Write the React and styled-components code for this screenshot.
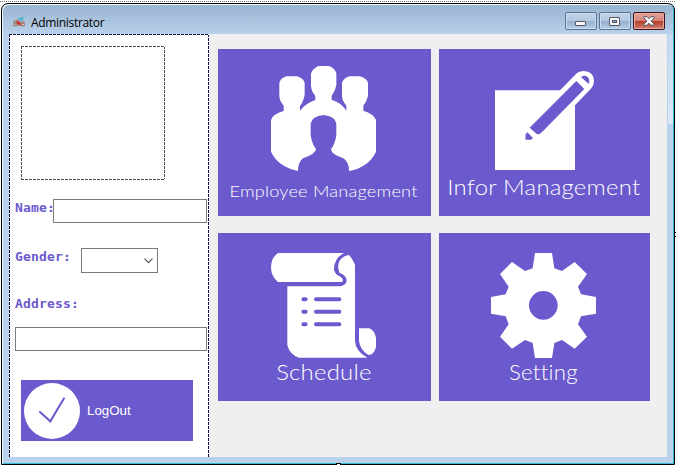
import React from "react";
import styled, { createGlobalStyle } from "styled-components";

const violet = "#6a5acd";

const GlobalStyle = createGlobalStyle`
  * { box-sizing: border-box; }
  body { margin: 0; background: #fff; overflow: hidden; }
`;

const Designer = styled.div`
  position: relative;
  width: 676px;
  height: 465px;
  padding: 3px 1px 0;
  background: repeating-linear-gradient(90deg, #777 0 1px, #fff 1px 2px) 0 1px / 100% 1px no-repeat #fff;
  font-family: "Liberation Sans", sans-serif;
`;

const Window = styled.div`
  display: flex;
  flex-direction: column;
  width: 674px;
  height: 462px;
  padding: 0 7px 7px;
  border: 1px solid #000;
  border-radius: 7px 7px 0 0;
  background:
    linear-gradient(#c3d8ed, #dbe8f6) 666px 30px / 5px 90px no-repeat,
    linear-gradient(#99b4d1, #b9d1ea) 0 0 / 100% 30px no-repeat,
    #b9d1ea;
  box-shadow: inset 1px 1px 0 #f3f8fc, inset -1px -1px 0 #35b8d4;
`;

const TitleBar = styled.header`
  display: flex;
  flex: 0 0 30px;
  align-items: center;
  gap: 5px;
  padding: 6px 2px 0 3px;
`;

const Title = styled.h1`
  flex: 1;
  margin: 0;
  padding-top: 1px;
  font: 400 12px/16px "Open Sans", sans-serif;
  letter-spacing: -0.32px;
  color: #000;
`;

const WindowButtons = styled.div`
  display: flex;
  gap: 2px;
  margin-top: -2px;
`;

const WindowButton = styled.button`
  display: flex;
  align-items: center;
  justify-content: center;
  width: 32px;
  height: 18px;
  padding: ${(p) => p.$drop || 0}px 0 0;
  border: 1px solid ${(p) => (p.$close ? "#43101c" : "#5d7290")};
  border-radius: 2px;
  background: ${(p) =>
    p.$close
      ? "linear-gradient(#e5a79c, #d68477 48%, #b93a29 50%, #c35b48 75%, #d48573)"
      : "linear-gradient(#c1d4e8, #b2c8df 48%, #96b0cb 50%, #a3bdd8 75%, #b9d2ea)"};
  box-shadow: inset 0 0 0 1px ${(p) => (p.$close ? "#e4aaa0" : "#ccdef0")};
`;

const Client = styled.main`
  display: flex;
  flex: 1;
  background: #efefef;
`;

const Side = styled.aside`
  width: 200px;
  height: 423px;
  padding: 12px 0 0 6px;
  background:
    repeating-linear-gradient(90deg, #140c48 0 3px, #fff 3px 4px) 0 0 / 100% 1px no-repeat,
    repeating-linear-gradient(#140c48 0 3px, #fff 3px 4px) 0 0 / 1px 100% no-repeat,
    repeating-linear-gradient(#140c48 0 3px, #fff 3px 4px) 100% 0 / 1px 100% no-repeat,
    #fff;
`;

const Photo = styled.div`
  width: 144px;
  height: 134px;
  margin: 0 0 19px 6px;
  background:
    repeating-linear-gradient(90deg, #505050 0 3px, #fff 3px 4px) 0 0 / 100% 1px no-repeat,
    repeating-linear-gradient(90deg, #505050 0 3px, #fff 3px 4px) 0 100% / 100% 1px no-repeat,
    repeating-linear-gradient(#505050 0 3px, #fff 3px 4px) 0 0 / 1px 100% no-repeat,
    repeating-linear-gradient(#505050 0 3px, #fff 3px 4px) 100% 0 / 1px 100% no-repeat;
`;

const Field = styled.div`
  display: flex;
  height: ${(p) => p.$height}px;
  margin-bottom: ${(p) => p.$after}px;
`;

const Label = styled.label`
  width: ${(p) => p.$width}px;
  padding-top: 1px;
  white-space: nowrap;
  font: 700 13px/16px "DejaVu Sans Mono", monospace;
  letter-spacing: 0.17px;
  color: ${violet};
`;

const Input = styled.input`
  width: ${(p) => p.$width}px;
  height: 24px;
  padding: 0 4px;
  border: 1px solid #7a7a7a;
  border-radius: 0;
  background: #fff;
  outline: none;
`;

const Combo = styled.div`
  display: flex;
  align-items: center;
  justify-content: flex-end;
  width: 77px;
  height: 25px;
  padding-right: 4px;
  border: 1px solid #7a7a7a;
`;

const LogOut = styled.button`
  display: flex;
  align-items: center;
  gap: 7px;
  width: 172px;
  height: 61px;
  margin: 29px 0 0 6px;
  padding: 1px 0 0 3px;
  border: 0;
  background: ${violet};
  color: #fff;
  font: 400 13.33px/18px "Liberation Sans", sans-serif;
`;

const Tiles = styled.section`
  display: grid;
  grid-template: 167px 168px / 213px 211px;
  gap: 17px 8px;
  align-content: start;
  padding: 15px 0 0 9px;
`;

const Tile = styled.button`
  display: flex;
  flex-direction: column;
  align-items: center;
  padding: ${(p) => p.$top}px 2px 0 0;
  border: 0;
  background: ${violet};
  color: #fff;
`;

const Caption = styled.span`
  margin-top: ${(p) => p.$gap}px;
  font: 300 ${(p) => p.$size}px/24px Lato, sans-serif;
  letter-spacing: 0.2px;
  transform: scaleX(${(p) => p.$stretch});
  white-space: nowrap;
`;

const Handle = styled.i`
  position: absolute;
  left: ${(p) => p.$x}px;
  top: ${(p) => p.$y}px;
  width: 5px;
  height: 5px;
  border: 1px solid #000;
  background: #fff;
`;

const AppIcon = () => (
  <svg width="14" height="12" viewBox="0 0 14 12">
    <path d="M6 2l3-1 3 0-1 4-4 1z" fill="#62b4d4" />
    <path d="M1 5l5-2 2 3 4-1 1 2-3 3H4L1 8z" fill="#a89088" />
    <path d="M4 5l4 1 1 3-4-1z" fill="#cc2f2b" />
    <circle cx="3" cy="8.5" r="2" fill="#8a8c90" />
    <circle cx="11" cy="8.5" r="2" fill="#a6716a" />
    <circle cx="3" cy="8.5" r=".8" fill="#d8b0a4" />
    <circle cx="11" cy="8.5" r=".8" fill="#eee" />
  </svg>
);

const MinimizeIcon = () => (
  <svg width="12" height="6" viewBox="0 0 12 6">
    <rect x=".5" y="1.5" width="10" height="4" rx=".5" fill="#f5f5f5" stroke="#535666" />
  </svg>
);

const MaximizeIcon = () => (
  <svg width="12" height="10" viewBox="0 0 12 10">
    <rect x=".5" y=".5" width="10" height="8" rx=".5" fill="#f5f5f5" stroke="#535666" />
    <rect x="3.5" y="3.5" width="4" height="2" fill="#91abc8" stroke="#535666" />
  </svg>
);

const CloseIcon = () => (
  <svg width="12" height="10" viewBox="0 0 12 10">
    <path
      d="M.7.7h3.4L6 2.7 7.9.7h3.4v1L8.2 5l3.1 3.2v1H7.9L6 7.2 4.1 9.3H.7v-1L3.8 5 .7 1.7z"
      fill="#f5f5f5"
      stroke="#535666"
    />
  </svg>
);

const Chevron = () => (
  <svg width="9" height="6" viewBox="0 0 9 6">
    <path d="M.5.7l4 4 4-4" fill="none" stroke="#555" strokeWidth="1.2" />
  </svg>
);

const CheckIcon = () => (
  <svg width="56" height="56" viewBox="0 0 168 168">
    <circle cx="84" cy="84" r="84" fill="#fff" />
    <path d="M48 87l31 28 41-69" fill="none" stroke={violet} strokeWidth="6" strokeLinecap="round" />
  </svg>
);

const PeopleIcon = () => (
  <svg width="105" height="105" viewBox="168 62 315 315">
    <path
      fill="#fff"
      d="M168 224Q172 207 206 197V181Q193 165 193 151V113Q195 100 214 93H246Q267 99 269 114V148Q267 164 255 183V196Q270 175 301 164V152Q288 137 288 120V85Q291 72 310 62H342Q360 69 364 84V119Q362 135 350 152V163Q381 173 394 196V181Q381 165 381 151V113Q385 98 404 93H435Q456 99 459 113V151Q457 165 445 181V196Q477 206 483 224V319Q462 365 402 377Q402 349 385 339Q349 327 348 312Q361 294 364 268V235Q361 212 325 209Q291 212 287 235V268Q290 294 303 311Q303 325 264 339Q249 350 249 377Q189 364 168 319Z"
    />
  </svg>
);

const PenIcon = () => (
  <svg width="101" height="99" viewBox="174 77 303 297">
    <path d="M180 135H375L426 83Q435 77 446 77Q477 78 477 108Q477 119 469 129L420 180V374H180Z" fill="#fff" />
    <g fill={violet}>
      <path d="M424 107L448 131L322 259Q315 267 306 267L284 247Z" />
      <path d="M438 95Q449 88 458 95Q466 104 461 116Z" />
      <path d="M277 261L294 278L288 283H271L272 267Z" />
    </g>
  </svg>
);

const ScrollIcon = () => (
  <svg width="105" height="105" viewBox="168 69 315 315">
    <g fill="#fff">
      <path d="M189 69H388Q357 83 357 119Q360 134 377 140Q388 148 381 156H189Q168 139 168 112Q168 84 189 69Z" />
      <path d="M401 75Q411 83 420 105V333Q422 365 457 383H252Q225 375 217 346V169H377Q396 163 395 149Q392 135 373 128Q366 109 373 94Q383 77 401 75Z" />
      <path d="M432 295H463Q479 302 483 323V350Q478 374 460 375Q435 360 432 333Z" />
    </g>
    <path
      stroke={violet}
      strokeWidth="12"
      strokeLinecap="round"
      d="M265 208h7M303 208h70M265 245h7M303 245h70M265 283h7M303 283h70"
    />
  </svg>
);

const GearIcon = () => (
  <svg width="105" height="105" viewBox="168 69 315 315">
    <path
      fill="#fff"
      fillRule="evenodd"
      d="M300 69H351L358 115L381 123L419 96L456 132L429 170L438 193L483 201V251L438 259L429 283L456 320L419 356L381 330L358 339L351 384H300L293 339L270 330L231 356L195 320L221 283L212 259L168 251V201L212 193L221 170L195 132L231 96L270 123L293 115ZM325 183A43 43 0 1 0 325 269A43 43 0 1 0 325 183Z"
    />
  </svg>
);

const tiles = [
  { text: "Employee Management", icon: PeopleIcon, top: 17, gap: 8, size: 16.5, stretch: 1.1 },
  { text: "Infor Management", icon: PenIcon, top: 22, gap: 5, size: 21, stretch: 1.138 },
  { text: "Schedule", icon: ScrollIcon, top: 20, gap: 2, size: 21, stretch: 1.14 },
  { text: "Setting", icon: GearIcon, top: 20, gap: 2, size: 21, stretch: 1.06 },
];

export default function App() {
  return (
    <Designer>
      <GlobalStyle />
      <Window>
        <TitleBar>
          <AppIcon />
          <Title>Administrator</Title>
          <WindowButtons>
            <WindowButton $drop={3} aria-label="Minimize"><MinimizeIcon /></WindowButton>
            <WindowButton $drop={1} aria-label="Maximize"><MaximizeIcon /></WindowButton>
            <WindowButton $close aria-label="Close"><CloseIcon /></WindowButton>
          </WindowButtons>
        </TitleBar>
        <Client>
          <Side>
            <Photo />
            <Field $height={24} $after={25}>
              <Label $width={38}>Name:</Label>
              <Input $width={154} aria-label="Name" />
            </Field>
            <Field $height={25} $after={22}>
              <Label $width={66}>Gender:</Label>
              <Combo><Chevron /></Combo>
            </Field>
            <Field $height={16} $after={16}>
              <Label $width={66}>Address:</Label>
            </Field>
            <Field $height={24} $after={0}>
              <Input $width={192} aria-label="Address" />
            </Field>
            <LogOut><CheckIcon />LogOut</LogOut>
          </Side>
          <Tiles>
            {tiles.map(({ text, icon: Icon, top, gap, size, stretch }) => (
              <Tile key={text} $top={top}>
                <Icon />
                <Caption $gap={gap} $size={size} $stretch={stretch}>{text}</Caption>
              </Tile>
            ))}
          </Tiles>
        </Client>
      </Window>
      <Handle $x={674} $y={232} />
      <Handle $x={336} $y={463} />
    </Designer>
  );
}
